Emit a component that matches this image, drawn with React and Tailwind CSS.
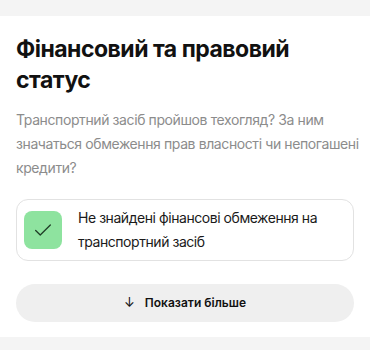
import React from 'react';

function CheckIcon() {
  return (
    <svg viewBox="0 0 24 24" className="w-[22px] h-[22px]" fill="none" stroke="#1f3d26" strokeWidth="1.4" strokeLinecap="round" strokeLinejoin="round">
      <path d="M4 12.5l5 5L20 6.5" />
    </svg>
  );
}

export default function App() {
  return (
    <div className="w-[370px] h-[350px] bg-[#f4f4f4] pt-4 font-['Inter',sans-serif] overflow-hidden">
      <section className="bg-white px-4 pt-[18px] pb-[15px]">
        <h2 className="text-[23px] leading-[31px] font-bold text-[#111] tracking-[-0.5px]">
          Фінансовий та правовий статус
        </h2>
        <p className="mt-[12px] -mr-2 text-[14px] leading-[24px] text-[#8c8c8c] tracking-[-0.4px]">
          Транспортний засіб пройшов техогляд? За ним значаться обмеження прав власності чи непогашені кредити?
        </p>

        <div className="mt-[19px] flex items-center gap-4 border border-[#e2e2e2] rounded-[12px] px-[7px] py-[6px]">
          <div className="w-[38px] h-[38px] shrink-0 rounded-[8px] bg-[#8ee39f] flex items-center justify-center">
            <CheckIcon />
          </div>
          <span className="text-[14px] leading-[24px] text-[#1a1a1a] tracking-[-0.45px]">
            Не знайдені фінансові обмеження на транспортний засіб
          </span>
        </div>

        <button className="mt-[23px] w-full h-[38px] rounded-full bg-[#efefef] flex items-center justify-center gap-[10px] text-[12px] font-semibold text-[#111]">
          <span className="text-[13px] font-normal">↓</span>
          <span>Показати більше</span>
        </button>
      </section>
    </div>
  );
}
